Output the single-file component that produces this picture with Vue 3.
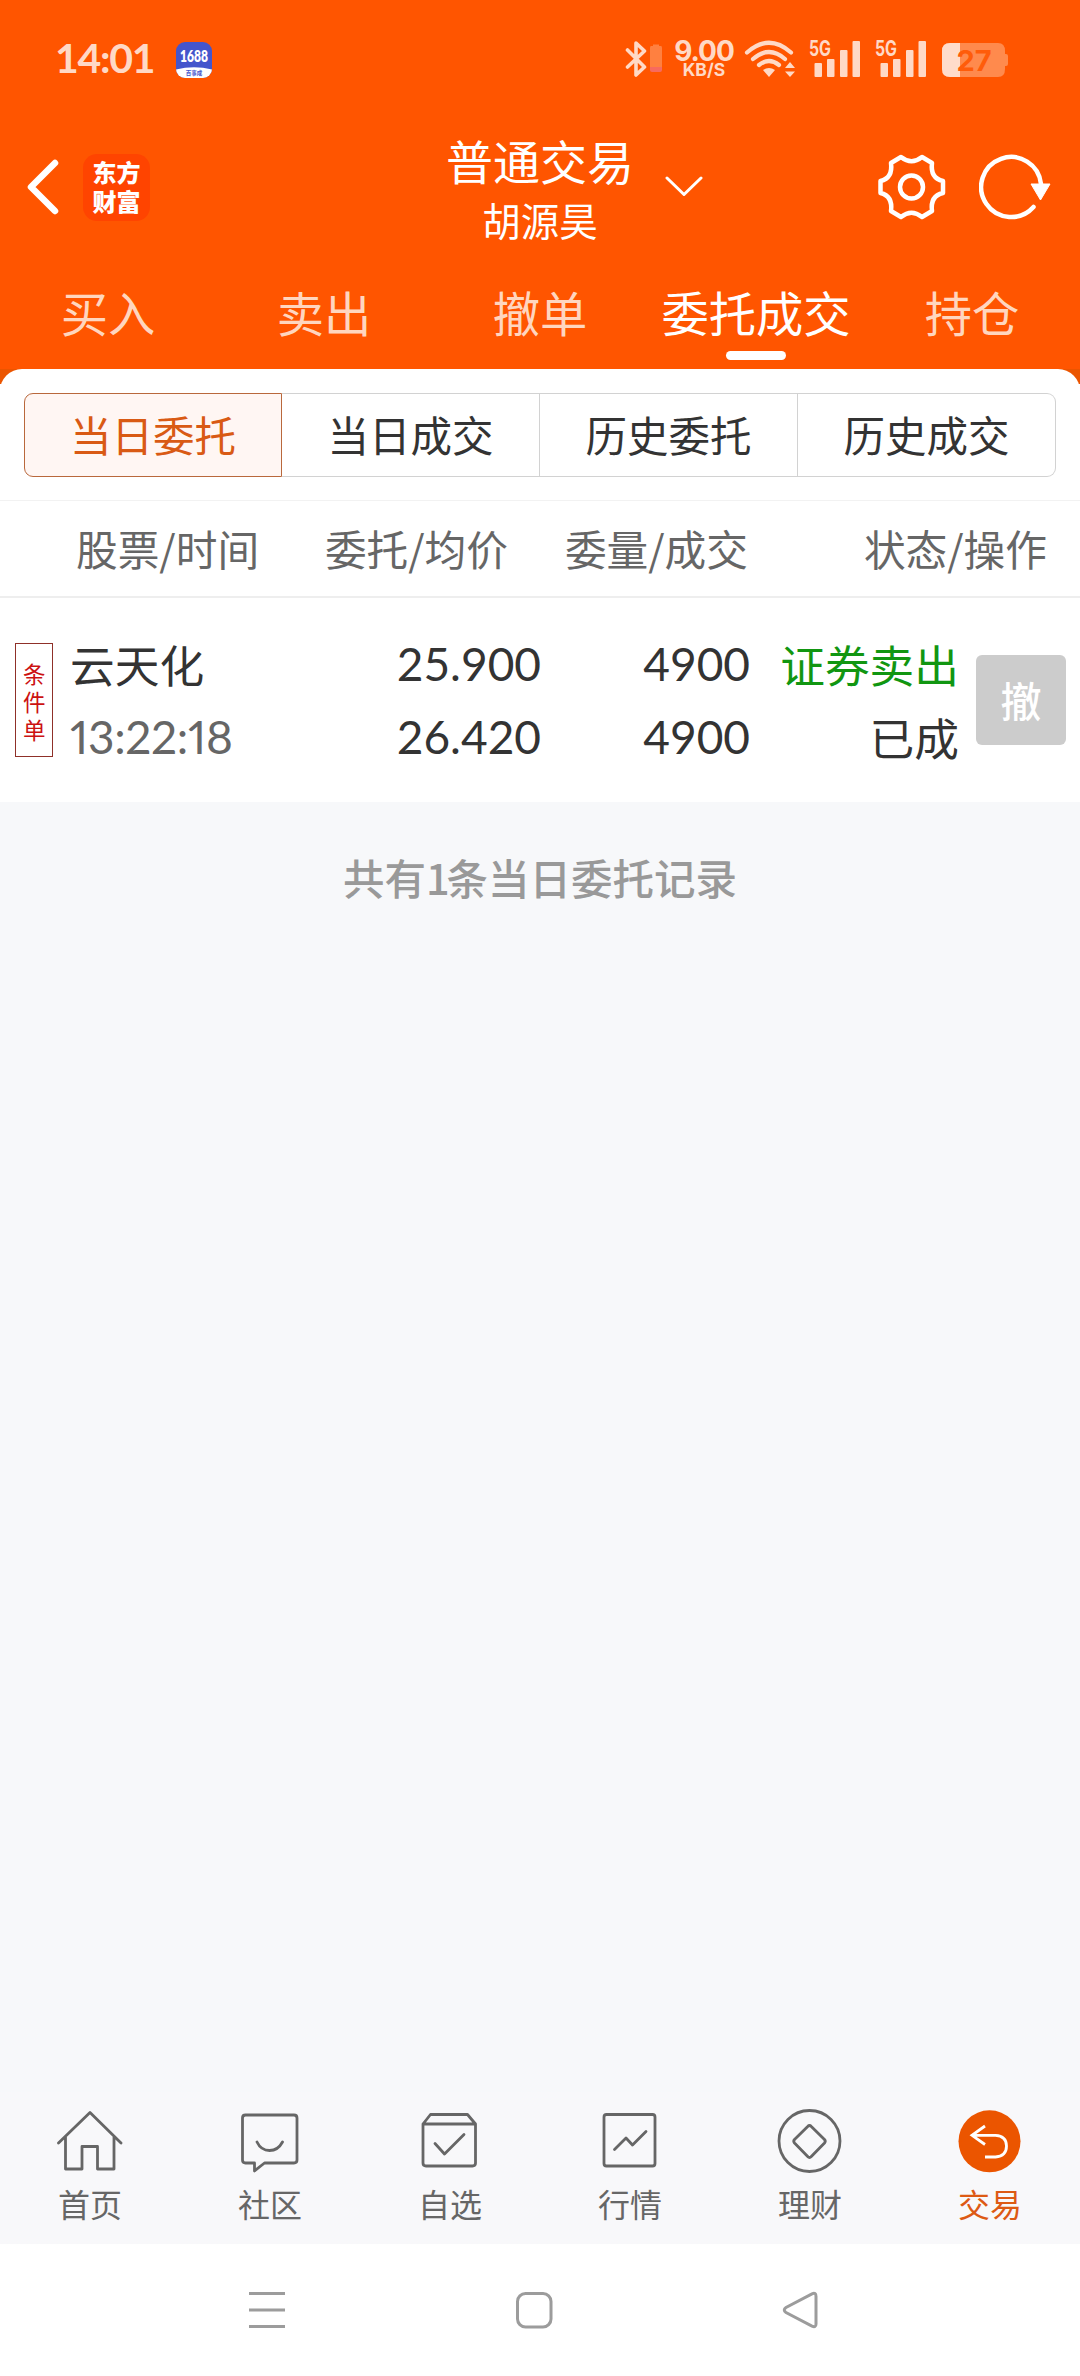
<template>
  <div class="app">
    <header class="header">
      <!-- Status bar -->
      <div class="status-bar">
        <span class="clock">14:01</span>
        <svg class="app-badge" width="36" height="36" viewBox="0 0 36 36">
          <defs>
            <clipPath id="badge-clip"><rect width="36" height="36" rx="9" /></clipPath>
          </defs>
          <g clip-path="url(#badge-clip)">
            <rect width="36" height="36" fill="#4455cc" />
            <path d="M0 27.5Q18 23 36 27.5V36H0Z" fill="#fff" />
          </g>
          <text x="4" y="20" textLength="28" lengthAdjust="spacingAndGlyphs" class="badge-num">1688</text>
          <text x="18" y="33" text-anchor="middle" class="badge-sub">百事成</text>
        </svg>
        <div class="status-icons">
          <svg width="38" height="38" viewBox="0 0 38 38">
            <path d="M2.500 10L19.500 27L11 35V3L19.500 11L2.500 27" fill="none" stroke="#ffd9c6" stroke-width="3.600" stroke-linejoin="round" stroke-linecap="round" />
            <path d="M26 6h2V4.500h6V6h2h0q1 0 1 2v19H25V8q0-2 1-2Z" fill="#ff8040" />
            <path d="M25 27h12v3q0 2-2 2h-8q-2 0-2-2Z" fill="#f76a5e" />
          </svg>
          <div class="net-speed">
            <span class="speed-num">9.00</span>
            <span class="speed-unit">KB/S</span>
          </div>
          <svg class="wifi" width="52" height="38" viewBox="0 0 52 38">
            <g fill="none" stroke="#ffd9c6" stroke-width="4.200" stroke-linecap="round">
              <path d="M3 12.500Q25-7 47 12.500" />
              <path d="M9 19Q25 5 41 19" />
              <path d="M15 25Q25 17 35 25" />
            </g>
            <path d="M19 30Q25 26 31 30L25 37Z" fill="#ffd9c6" />
            <path d="M41 28L46 22L51 28ZM41 31.500H51L46 37Z" fill="#ffd9c6" />
          </svg>
          <svg v-for="n in 2" :key="n" class="signal" width="54" height="38" viewBox="0 0 54 38">
            <text x="1" y="16" textLength="22" lengthAdjust="spacingAndGlyphs" class="net-type">5G</text>
            <g fill="#ffd9c6">
              <rect x="6.500" y="23" width="7.500" height="14" rx="1" />
              <rect x="19" y="19" width="7.500" height="18" rx="1" />
              <rect x="32" y="10" width="7.500" height="27" rx="1" />
              <rect x="44.500" y="1" width="7.500" height="36" rx="1" />
            </g>
          </svg>
          <svg class="battery" width="67" height="34" viewBox="0 0 67 34">
            <path d="M8 0H56Q63 0 63 8V11H64Q66 11 66 13V21Q66 23 64 23H63V26Q63 34 56 34H8Q0 34 0 26V8Q0 0 8 0Z" fill="#ff8a4d" />
            <path d="M8 0H18V34H8Q0 34 0 26V8Q0 0 8 0Z" fill="#ffdccb" />
            <text x="32" y="28" text-anchor="middle" class="battery-num">27</text>
          </svg>
        </div>
      </div>

      <!-- Title bar -->
      <div class="title-bar">
        <div class="title-left">
          <svg width="32" height="56" viewBox="0 0 32 56">
            <path d="M28 4L4 28L28 52" fill="none" stroke="#fff" stroke-width="6.500" stroke-linecap="round" stroke-linejoin="round" />
          </svg>
          <div class="logo"><span>东方</span><span>财富</span></div>
        </div>
        <div class="title-center">
          <div class="title">普通交易</div>
          <div class="subtitle">胡源昊</div>
          <svg class="chevron" width="38" height="22" viewBox="0 0 38 22">
            <path d="M2 2L19 18.500L36 2" fill="none" stroke="#fff" stroke-width="3" stroke-linecap="round" stroke-linejoin="round" />
          </svg>
        </div>
        <div class="title-right">
          <svg width="68" height="66" viewBox="0 0 68 66">
            <g fill="none" stroke="#fff" stroke-width="4.500" stroke-linejoin="round">
              <path d="M23 3Q33.500 11.500 44 3L54 9Q52 24 65 27V39Q52 42 54 57L44 63Q33.500 54.500 23 63L13 57Q15 42 2.500 39V27Q15 24 13 9Z" />
              <circle cx="33.500" cy="33" r="11.500" />
            </g>
          </svg>
          <svg width="72" height="66" viewBox="0 0 72 66">
            <path d="M54.500 53A30 30 0 1 1 62 30" fill="none" stroke="#fff" stroke-width="4.500" stroke-linecap="round" />
            <path d="M52 30H71L61.500 46Z" fill="#fff" stroke="#fff" stroke-width="1" stroke-linejoin="round" />
          </svg>
        </div>
      </div>

      <!-- Main tabs -->
      <nav class="tabs">
        <div v-for="tab in tabs" :key="tab" class="tab" :class="{ active: tab === activeTab }" @click="activeTab = tab">
          {{ tab }}
        </div>
      </nav>
    </header>

    <div class="panel-wrap">
      <section class="panel">
        <!-- Segmented control -->
        <div class="segments">
          <div v-for="seg in segments" :key="seg" class="segment" :class="{ active: seg === activeSegment }" @click="activeSegment = seg">
            {{ seg }}
          </div>
        </div>

        <div class="table-head">
          <span>股票/时间</span>
          <span>委托/均价</span>
          <span>委量/成交</span>
          <span>状态/操作</span>
        </div>

        <!-- Orders -->
        <div v-for="order in orders" :key="order.time" class="order">
          <div class="order-tag">{{ order.tag }}</div>
          <div class="cell name">
            <span>{{ order.name }}</span>
            <span class="num time">{{ order.time }}</span>
          </div>
          <div class="cell num">
            <span>{{ order.price }}</span>
            <span>{{ order.avg }}</span>
          </div>
          <div class="cell num">
            <span>{{ order.amount }}</span>
            <span>{{ order.filled }}</span>
          </div>
          <div class="cell">
            <span class="sell">{{ order.side }}</span>
            <span>{{ order.state }}</span>
          </div>
          <button class="cancel-btn">撤</button>
        </div>
      </section>
    </div>

    <main class="content">
      <p class="summary">共有<span class="count">{{ orders.length }}</span>条当日委托记录</p>
    </main>

    <!-- Bottom navigation -->
    <nav class="bottom-nav">
      <div v-for="item in navItems" :key="item.label" class="nav-item" :class="{ active: item.active }">
        <svg width="66" height="66" viewBox="0 0 66 66">
          <circle v-if="item.active" cx="32.500" cy="33.300" r="31" fill="#eb5500" />
          <path :d="item.path" fill="none" :stroke="item.active ? '#fff' : '#666'" stroke-width="2.800" :stroke-linecap="item.active ? 'butt' : 'round'" :stroke-linejoin="item.active ? 'miter' : 'round'" />
        </svg>
        <span>{{ item.label }}</span>
      </div>
    </nav>

    <!-- System keys -->
    <div class="system-nav">
      <svg width="40" height="40" viewBox="0 0 40 40">
        <path d="M2 3.500H38M2 20H38M2 36.500H38" />
      </svg>
      <svg width="40" height="40" viewBox="0 0 40 40">
        <rect x="3.500" y="3.500" width="33.500" height="33.500" rx="8" />
      </svg>
      <svg width="40" height="40" viewBox="0 0 40 40">
        <path d="M32 3.800Q36 2 36 6.500V34Q36 38 32 36.200L6 22.500Q2.500 20 6 17.500Z" />
      </svg>
    </div>
  </div>
</template>

<script setup>
import { ref } from 'vue'

const tabs = ['买入', '卖出', '撤单', '委托成交', '持仓']
const activeTab = ref('委托成交')

const segments = ['当日委托', '当日成交', '历史委托', '历史成交']
const activeSegment = ref('当日委托')

const orders = [
  {
    tag: '条件单',
    name: '云天化',
    time: '13:22:18',
    price: '25.900',
    avg: '26.420',
    amount: '4900',
    filled: '4900',
    side: '证券卖出',
    state: '已成'
  }
]

const navItems = [
  { label: '首页', path: 'M1.500 35L33 4.500L64 35M8.500 29V61H25V38.500H40.500V61H57V29' },
  { label: '社区', path: 'M8.500 7H57Q60 7 60 10V52Q60 55 57 55H27.500L17.500 63V55H8.500Q5.500 55 5.500 52V10Q5.500 7 8.500 7ZM20 34Q24 42.500 32.500 42.500Q41 42.500 45.500 34' },
  { label: '自选', path: 'M6 16L13.500 6.500H50.500L58.500 16V55Q58.500 58 55.500 58H9Q6 58 6 55ZM6 16H58.500M18 35.500L27.500 46L47 26.500' },
  { label: '行情', path: 'M9.500 6.500H55.500Q58 6.500 58 9V55.500Q58 58 55.500 58H9.500Q7 58 7 55.500V9Q7 6.500 9.500 6.500ZM17.500 41.500L29 30L35.500 37L49 23.500' },
  { label: '理财', path: 'M63 33A30.500 30.500 0 1 1 2 33A30.500 30.500 0 1 1 63 33ZM30.700 18.500Q32.500 16.500 34.300 18.500L47.500 31.500Q49 33.300 47.500 35L34.300 48.500Q32.500 50.500 30.700 48.500L17.500 35Q16 33.300 17.500 31.500Z' },
  { label: '交易', active: true, path: 'M28 18L15 27.300L28 36.500M15 27.300H38.500Q49.500 28 49.500 38Q49.500 48 38.500 49H28' }
]
</script>

<style>
body {
  margin: 0;
  background: #f7f8fa;
}
</style>

<style scoped>
.app {
  width: 1080px;
  height: 2376px;
  display: flex;
  flex-direction: column;
  background: #f7f8fa;
  font-family: 'Noto Sans CJK SC', sans-serif;
  color: #333;
  overflow: hidden;
}

.header {
  height: 369px;
  flex: none;
  background: #ff5500;
  color: #fff;
}

.status-bar {
  height: 118px;
  display: flex;
  align-items: center;
  padding: 0 71px 0 55px;
  box-sizing: border-box;
}

.clock {
  width: 121px;
  margin-top: -3px;
  font-family: Lato, sans-serif;
  font-size: 41px;
  font-weight: 700;
  letter-spacing: -1.3px;
  color: #ffd9c6;
}

.app-badge {
  margin-top: 2px;
}

.badge-num {
  font: 800 16px Lato, sans-serif;
  fill: #fff;
}

.badge-sub {
  font: 700 5.5px 'Noto Sans CJK SC', sans-serif;
  fill: #4455cc;
}

.status-icons {
  margin-left: auto;
  display: flex;
  align-items: center;
}

.net-speed {
  width: 62px;
  margin-left: 10px;
  display: flex;
  flex-direction: column;
  align-items: center;
  color: #ffd9c6;
  font-family: Inter, sans-serif;
  font-weight: 700;
}

.speed-num {
  font-size: 28px;
  line-height: 22px;
  letter-spacing: -1px;
}

.speed-unit {
  font-size: 17.5px;
  line-height: 16px;
}

.wifi {
  margin-left: 9px;
}

.signal {
  margin-left: 12px;
  overflow: visible;
}

.net-type {
  font: 700 21px Inter, sans-serif;
  fill: #ffd9c6;
}

.battery {
  margin-left: 14px;
  margin-top: 2px;
}

.battery-num {
  font: 700 29px Inter, sans-serif;
  fill: #ff5c0a;
}

.title-bar {
  height: 138px;
  display: grid;
  grid-template-columns: 1fr 200px 1fr;
  align-items: center;
}

.title-left {
  display: flex;
  align-items: center;
  gap: 24px;
  padding-left: 27px;
}

.logo {
  width: 67px;
  height: 67px;
  border-radius: 14px;
  background: #ff4400;
  display: flex;
  flex-direction: column;
  align-items: center;
  justify-content: center;
  padding-bottom: 3px;
  box-sizing: border-box;
  font-size: 24px;
  font-weight: 900;
  line-height: 29px;
}

.title-center {
  position: relative;
  display: flex;
  flex-direction: column;
  align-items: center;
  padding-top: 3px;
  white-space: nowrap;
}

.title {
  font-size: 47px;
  line-height: 60px;
}

.subtitle {
  font-size: 38.5px;
  line-height: 58px;
}

.chevron {
  position: absolute;
  left: 225px;
  top: 49px;
}

.title-right {
  display: flex;
  justify-content: flex-end;
  gap: 33px;
  padding-right: 29px;
}

.tabs {
  height: 113px;
  display: grid;
  grid-template-columns: repeat(5, 1fr);
}

.tab {
  position: relative;
  font-size: 47.3px;
  line-height: 111px;
  text-align: center;
  white-space: nowrap;
  color: #ffd6bf;
}

.tab.active {
  color: #fff;
}

.tab.active::after {
  content: '';
  position: absolute;
  left: 50%;
  bottom: 9px;
  width: 60px;
  height: 9px;
  margin-left: -30px;
  border-radius: 5px;
  background: #fff;
}

.panel-wrap {
  flex: none;
  background: linear-gradient(#eb5500 15px, #fff 15px);
}

.panel {
  height: 433px;
  background: #fff;
  border-radius: 22px 22px 0 0;
  padding-top: 24px;
  box-sizing: border-box;
}

.segments {
  display: grid;
  grid-template-columns: repeat(4, 1fr);
  height: 84px;
  margin: 0 24px;
  font-size: 41.5px;
}

.segment {
  display: flex;
  align-items: center;
  justify-content: center;
  padding-bottom: 2px;
  border: 1px solid #d2d2d2;
  border-left-width: 0;
}

.segment:first-child {
  border-left-width: 1px;
  border-radius: 9px 0 0 9px;
}

.segment:last-child {
  border-radius: 0 9px 9px 0;
}

.segment.active {
  border-color: #b9683c;
  background: #fff6f3;
  color: #d95a14;
}

.table-head {
  display: grid;
  grid-template-columns: 268px 240px 240px 299px;
  align-items: center;
  justify-items: end;
  height: 98px;
  margin-top: 23px;
  padding-bottom: 2px;
  border-top: 1px solid #f2f2f2;
  border-bottom: 2px solid #eee;
  box-sizing: border-box;
  font-size: 41.7px;
  color: #666;
}

.table-head span:first-child {
  justify-self: start;
  padding-left: 76px;
}

.order {
  height: 204px;
  display: grid;
  grid-template-columns: 39px 200px 287px 209px 209px 107px;
  align-items: center;
  padding-left: 15px;
  box-sizing: border-box;
  font-size: 44.7px;
  white-space: nowrap;
}

.order-tag {
  height: 114px;
  width: 38px;
  border: 1px solid #8f3029;
  box-sizing: border-box;
  padding: 15px 7px 0;
  font-size: 22.5px;
  line-height: 28px;
  white-space: normal;
  word-break: break-all;
  color: #c11;
}

.cell {
  display: flex;
  flex-direction: column;
  align-items: flex-end;
  line-height: 73px;
}

.cell.name {
  align-items: flex-start;
  padding-left: 16px;
}

.num {
  font-family: Lato, sans-serif;
  font-size: 46px;
}

.time {
  color: #666;
  font-variant-numeric: proportional-nums;
  letter-spacing: -0.3px;
}

.sell {
  color: #119611;
}

.cancel-btn {
  width: 90px;
  height: 90px;
  margin-left: 17px;
  padding: 0 0 3px;
  border: none;
  border-radius: 6px;
  background: #ccc;
  color: #fff;
  font-family: inherit;
  font-size: 41px;
  font-weight: 500;
}

.content {
  flex: 1;
}

.summary {
  margin: 45px 0 0;
  text-align: center;
  font-size: 41.5px;
  font-weight: 500;
  line-height: 60px;
  color: #999;
}

.count {
  letter-spacing: -3px;
}

.bottom-nav {
  flex: none;
  height: 152px;
  display: grid;
  grid-template-columns: repeat(6, 180px);
  padding-top: 16px;
  box-sizing: border-box;
  background: #f8f8fa;
}

.nav-item {
  display: flex;
  flex-direction: column;
  align-items: center;
  font-size: 32px;
  line-height: 40px;
  color: #666;
}

.nav-item span {
  margin-top: 9px;
}

.nav-item.active {
  color: #dd5a14;
}

.system-nav {
  flex: none;
  height: 132px;
  display: flex;
  align-items: center;
  justify-content: space-between;
  padding: 0 260px 0 247px;
  background: #fff;
}

.system-nav svg {
  fill: none;
  stroke: #9c9c9c;
  stroke-width: 3;
}
</style>
